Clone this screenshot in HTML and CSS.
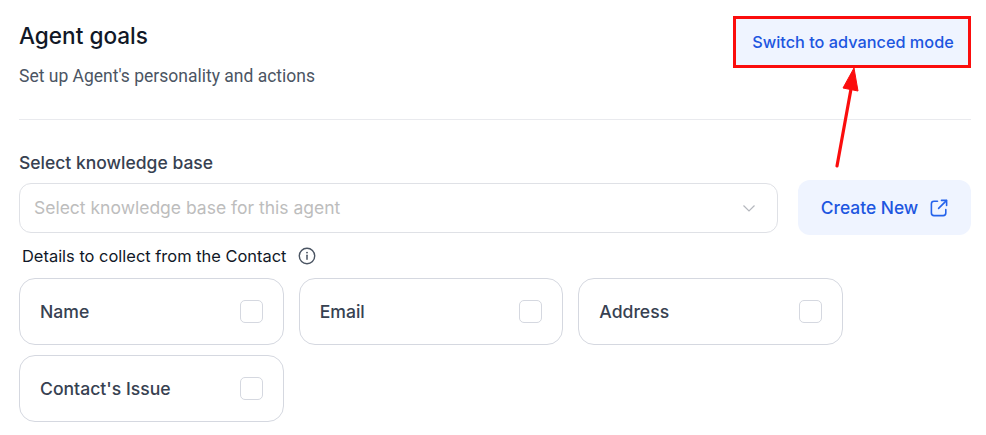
FILE: index.html
```html
<!DOCTYPE html>
<html lang="en">
<head>
<meta charset="utf-8">
<title>Agent goals</title>
<link rel="stylesheet" href="styles.css">
</head>
<body>
<main class="page">
  <header class="header">
    <div class="intro">
      <h1 class="title">Agent goals</h1>
      <p class="subtitle">Set up Agent's personality and actions</p>
    </div>
    <button class="advanced" type="button">Switch to advanced mode</button>
  </header>
  <hr class="divider">
  <label class="kb-label">Select knowledge base</label>
  <div class="kb-row">
    <div class="select">
      <span class="placeholder">Select knowledge base for this agent</span>
      <svg class="chevron" width="16" height="16" viewBox="0 0 16 16" fill="none"><path d="M2.5 5.5 8 11l5.5-5.5" stroke="#b4b7bd" stroke-width="1.2"/></svg>
    </div>
    <button class="create" type="button">
      <span>Create New</span>
      <svg width="20" height="20" viewBox="0 0 20 20" fill="none" stroke="#2563eb" stroke-width="1.6" stroke-linecap="round" stroke-linejoin="round"><path d="M8.5 3.2H5a2.6 2.6 0 0 0-2.6 2.6V15A2.6 2.6 0 0 0 5 17.6h9.2a2.6 2.6 0 0 0 2.6-2.6v-3.5"/><path d="M12.5 2.4h5.1v5.1"/><path d="M17.4 2.6 9.6 10.4"/></svg>
    </button>
  </div>
  <div class="details">
    <span>Details to collect from the Contact</span>
    <svg width="18" height="18" viewBox="0 0 18 18" fill="none"><circle cx="9" cy="9" r="7.7" stroke="#4b5563" stroke-width="1.4"/><path d="M9 8.2v4" stroke="#4b5563" stroke-width="1.5" stroke-linecap="round"/><circle cx="9" cy="5.6" r=".95" fill="#4b5563"/></svg>
  </div>
  <div class="options">
    <div class="option"><span>Name</span><i class="check"></i></div>
    <div class="option"><span>Email</span><i class="check"></i></div>
    <div class="option"><span>Address</span><i class="check"></i></div>
    <div class="option"><span>Contact's Issue</span><i class="check"></i></div>
  </div>
</main>
<svg class="arrow" width="40" height="105" viewBox="0 0 40 105" fill="none"><path d="M4 99 18 22" stroke="#fb0d0d" stroke-width="3.2" stroke-linecap="round"/><path d="M21 1 25 24 10 21Z" fill="#fb0d0d" stroke="#fb0d0d" stroke-linejoin="round"/></svg>
</body>
</html>
```
FILE: styles.css
```css
* { box-sizing: border-box; }
html, body { margin: 0; padding: 0; background: #fff; }
body { width: 986px; height: 435px; overflow: hidden; position: relative; font-family: Inter, "Liberation Sans", sans-serif; }
.page { padding: 16px 15px 0 19px; }
.header { display: flex; justify-content: space-between; align-items: flex-start; height: 103px; }
.title { margin: 5px 0 0; font-size: 22.6px; line-height: 29px; font-weight: 500; color: #111827; }
.subtitle { margin: 14px 0 0; font-family: Roboto, sans-serif; font-size: 17.5px; line-height: 24px; font-weight: 400; color: #4b5563; }
.advanced { width: 238px; height: 52px; padding: 0 0 0 2px; border: 3px solid #fb0d0d; background: #eff4ff; color: #1d56e0; font: 500 16.3px/24px Inter, sans-serif; }
.divider { margin: 0; border: 0; border-top: 1px solid #e9eaee; }
.kb-label { display: block; margin-top: 31px; font-size: 17.5px; line-height: 24px; font-weight: 450; color: #374151; }
.kb-row { display: flex; gap: 20px; margin-top: 5px; align-items: center; }
.select { width: 759px; height: 50px; display: flex; align-items: center; justify-content: space-between; padding: 0 20px 0 14px; border: 1px solid #dfe1e6; border-radius: 12px; background: #fff; }
.placeholder { font-size: 17.5px; color: #bdbdbd; }
.create { width: 173px; height: 55px; display: flex; align-items: center; justify-content: center; gap: 11px; padding: 0 0 0 1px; border: 0; border-radius: 12px; background: #eff4ff; color: #1d56e0; font: 500 17.4px/24px Inter, sans-serif; }
.details { display: flex; align-items: center; gap: 11px; margin: 8px 0 0 3px; height: 26px; font-size: 16.45px; color: #111827; }
.options { display: grid; grid-template-columns: repeat(3, 264.67px); column-gap: 15px; row-gap: 10px; margin-top: 9px; }
.option { height: 67px; display: flex; align-items: center; justify-content: space-between; padding: 0 20px; border: 1px solid #d5d8e0; border-radius: 16px; font-size: 17.6px; font-weight: 450; color: #374151; }
.check { width: 23px; height: 23px; border: 1px solid #d5d8e0; border-radius: 5px; }
.arrow { position: absolute; left: 833px; top: 67px; }
```
